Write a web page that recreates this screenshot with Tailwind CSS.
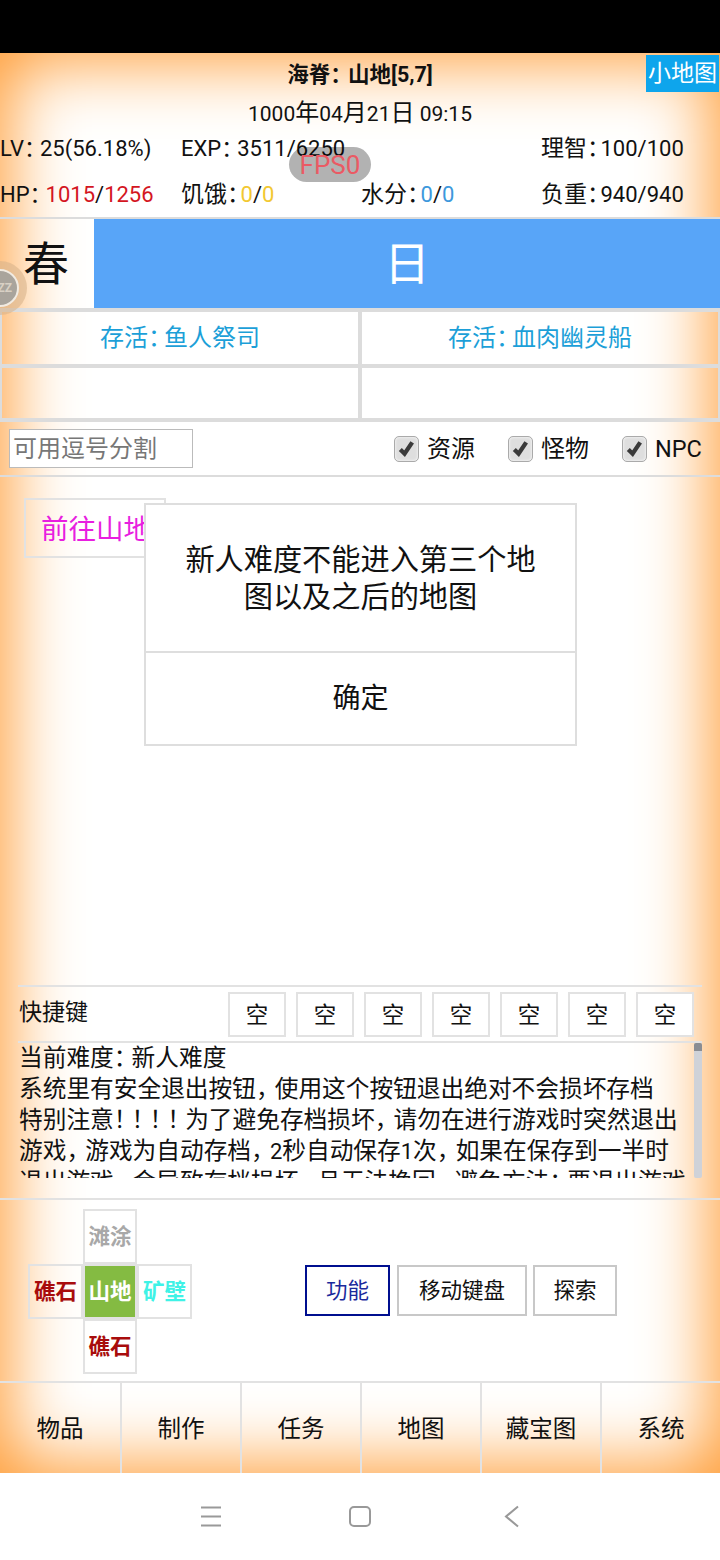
<!DOCTYPE html>
<html lang="zh">

<head>
  <meta charset="UTF-8">
  <meta name="viewport" content="width=device-width, initial-scale=1.0">
  <title>海脊</title>
  <script src="https://cdn.jsdelivr.net/npm/@tailwindcss/browser@4"></script>
</head>

<body class="w-[720px] h-[1560px] overflow-hidden bg-white text-[#111] font-['Roboto','Noto_Sans_CJK_SC',sans-serif] text-[24px] leading-[30px] [font-feature-settings:'halt']">
  <!-- status bar -->
  <div class="h-[53px] bg-black"></div>

  <main class="relative h-[1420px] flex flex-col bg-white shadow-[inset_0_0_70px_8px_#ff9a30] overflow-hidden">
    <!-- header -->
    <header class="relative h-[164px] shrink-0">
      <div class="h-[39px] pt-[7px] text-center font-bold text-[21.5px]">海脊<span class="pr-[7px]">：</span>山地[5,7]</div>
      <div class="h-[36px] pt-[6px] text-center"><span class="text-[21px]">1000</span>年<span class="text-[21px]">04</span>月<span class="text-[21px]">21</span>日<span class="text-[21px]"> 09:15</span></div>
      <div class="flex h-[46px] pt-[6px] text-[23px]">
        <div class="w-[181px] whitespace-nowrap text-[22px]">LV<span class="pr-[5px]">：</span>25(56.18%)</div>
        <div class="w-[360px] whitespace-nowrap text-[22px]">EXP<span class="pr-[5px]">：</span>3511/6250</div>
        <div class="whitespace-nowrap">理智<span class="pr-[2px]">：</span><span class="text-[22px]">100/100</span></div>
      </div>
      <div class="flex h-[43px] pt-[6px] text-[23px]">
        <div class="w-[181px] whitespace-nowrap text-[22px]">HP<span class="pr-[5px]">：</span><span class="text-[#d4161f]">1015</span>/<span class="text-[#d4161f]">1256</span></div>
        <div class="w-[180px] whitespace-nowrap">饥饿<span class="pr-[2px]">：</span><span class="text-[22px]"><span class="text-[#f2c832]">0</span>/<span class="text-[#f2c832]">0</span></span></div>
        <div class="w-[180px] whitespace-nowrap">水分<span class="pr-[2px]">：</span><span class="text-[22px]"><span class="text-[#3d98dc]">0</span>/<span class="text-[#3d98dc]">0</span></span></div>
        <div class="whitespace-nowrap">负重<span class="pr-[2px]">：</span><span class="text-[22px]">940/940</span></div>
      </div>
      <button class="absolute right-[1px] top-[2px] w-[73px] h-[37px] bg-[#0ea5ec] text-white text-[23px]">小地图</button>
      <div class="absolute left-[289px] top-[94px] w-[82px] h-[35px] rounded-full bg-black/30 text-[#ea5a64] text-[26px] leading-[36px] text-center">FPS0</div>
    </header>

    <!-- season row -->
    <section class="h-[95px] shrink-0 flex border-t-2 border-b-4 border-[#dcdcdc]">
      <div class="w-[92px] flex items-center justify-center text-[46px]">春</div>
      <div class="flex-1 ml-[2px] flex items-center justify-center bg-[#58a5f8] text-white text-[46px]">日</div>
    </section>

    <!-- boss status -->
    <section class="h-[106px] shrink-0 grid grid-cols-2 grid-rows-[54px_52px]">
      <div class="flex items-center justify-center border-x-2 border-b-2 border-[#dcdcdc] text-[#1c9fd8]">存活<span class="pr-[4px]">：</span>鱼人祭司</div>
      <div class="flex items-center justify-center border-x-2 border-b-2 border-[#dcdcdc] text-[#1c9fd8]">存活<span class="pr-[4px]">：</span>血肉幽灵船</div>
      <div class="border-x-2 border-t-2 border-[#dcdcdc]"></div>
      <div class="border-x-2 border-t-2 border-[#dcdcdc]"></div>
    </section>

    <!-- filter -->
    <section class="h-[59px] shrink-0 flex items-center pl-[9px] border-t-4 border-b-2 border-[#dcdcdc]">
      <div class="w-[184px] h-[39px] px-[3px] border border-[#bbb] bg-white text-[#777] leading-[39px]">可用逗号分割</div>
      <label class="ml-[201px] flex items-center">
        <span class="w-[25px] h-[26px] rounded-[5px] border border-[#aaa] bg-[#dedede] flex items-center justify-center shadow-[inset_0_0_3px_#fff]">
          <svg viewBox="0 0 20 20" class="w-[19px] h-[19px]"><path d="M3.5 11 L8 15.5 L16 3.5" fill="none" stroke="#3a3a3a" stroke-width="4.5"/></svg>
        </span>
        <span class="ml-[8px]">资源</span>
      </label>
      <label class="ml-[33px] flex items-center">
        <span class="w-[25px] h-[26px] rounded-[5px] border border-[#aaa] bg-[#dedede] flex items-center justify-center shadow-[inset_0_0_3px_#fff]">
          <svg viewBox="0 0 20 20" class="w-[19px] h-[19px]"><path d="M3.5 11 L8 15.5 L16 3.5" fill="none" stroke="#3a3a3a" stroke-width="4.5"/></svg>
        </span>
        <span class="ml-[8px]">怪物</span>
      </label>
      <label class="ml-[33px] flex items-center">
        <span class="w-[25px] h-[26px] rounded-[5px] border border-[#aaa] bg-[#dedede] flex items-center justify-center shadow-[inset_0_0_3px_#fff]">
          <svg viewBox="0 0 20 20" class="w-[19px] h-[19px]"><path d="M3.5 11 L8 15.5 L16 3.5" fill="none" stroke="#3a3a3a" stroke-width="4.5"/></svg>
        </span>
        <span class="ml-[8px] text-[23.5px]">NPC</span>
      </label>
    </section>

    <!-- map actions -->
    <section class="h-[508px] shrink-0 pl-[24px] pt-[21px]">
      <button class="w-[142px] h-[60px] pt-[3px] border-2 border-[#e2e2e2] text-left pl-[15px] text-[#e81ee0] text-[27.5px] whitespace-nowrap overflow-hidden">前往山地</button>
    </section>

    <!-- shortcuts -->
    <section class="h-[58px] shrink-0 mx-[18px] flex items-start pt-[5px] border-y-2 border-[#e2e2e2]">
      <div class="w-[210px] pl-[1px] pt-[6px] text-[23px]">快捷键</div>
      <div class="flex gap-[10px] text-[22.5px]">
        <button class="w-[58px] h-[45px] border-2 border-[#e2e2e2] bg-white">空</button>
        <button class="w-[58px] h-[45px] border-2 border-[#e2e2e2] bg-white">空</button>
        <button class="w-[58px] h-[45px] border-2 border-[#e2e2e2] bg-white">空</button>
        <button class="w-[58px] h-[45px] border-2 border-[#e2e2e2] bg-white">空</button>
        <button class="w-[58px] h-[45px] border-2 border-[#e2e2e2] bg-white">空</button>
        <button class="w-[58px] h-[45px] border-2 border-[#e2e2e2] bg-white">空</button>
        <button class="w-[58px] h-[45px] border-2 border-[#e2e2e2] bg-white">空</button>
      </div>
    </section>

    <!-- log -->
    <section class="relative h-[155px] shrink-0 ml-[19px] mr-[18px]">
      <div class="h-[135px] overflow-hidden leading-[31px] text-[23.7px] w-[670px]">
        当前难度<span class="pr-[6px]">：</span>新人难度<br>
        系统里有安全退出按钮<span class="pr-[7px]">，</span>使用这个按钮退出绝对不会损坏存档<br>
        特别注意<span class="pr-[6px]">！</span><span class="pr-[6px]">！</span><span class="pr-[6px]">！</span><span class="pr-[6px]">！</span>为了避免存档损坏<span class="pr-[7px]">，</span>请勿在进行游戏时突然退出游戏<span class="pr-[7px]">，</span>游戏为自动存档<span class="pr-[7px]">，</span><span class="text-[22px]">2</span>秒自动保存<span class="text-[22px]">1</span>次<span class="pr-[7px]">，</span>如果在保存到一半时退出游戏<span class="pr-[7px]">，</span>会导致存档损坏<span class="pr-[7px]">，</span>且无法挽回<span class="pr-[7px]">，</span>避免方法<span class="pr-[6px]">：</span>要退出游戏
      </div>
      <div class="absolute right-0 top-0 w-[8px] h-[135px] rounded-[2px] bg-[#cfd2d8]">
        <div class="h-[8px] rounded-t-[2px] bg-[#8a8d93]"></div>
      </div>
    </section>

    <!-- movement -->
    <section class="h-[185px] shrink-0 flex items-center border-y-2 border-[#e2e2e2]">
      <div class="ml-[28px] mt-[2px] grid grid-cols-[55px_54px_55px] grid-rows-[55px_55px_55px] font-bold text-[21.5px]">
        <div></div>
        <div class="flex items-center justify-center pt-[1px] border-2 border-[#e2e2e2] text-[#a8a8a8]">滩涂</div>
        <div></div>
        <div class="flex items-center justify-center pt-[1px] border-2 border-[#e2e2e2] text-[#a80c0c]">礁石</div>
        <div class="flex items-center justify-center pt-[1px] border-2 border-[#e2e2e2] bg-[#84bb42] text-white">山地</div>
        <div class="flex items-center justify-center pt-[1px] border-2 border-[#e2e2e2] text-[#3ff2e6]">矿壁</div>
        <div></div>
        <div class="flex items-center justify-center pt-[1px] border-2 border-[#e2e2e2] text-[#a80c0c]">礁石</div>
        <div></div>
      </div>
      <div class="ml-[113px] flex gap-[7px] text-[21.5px]">
        <button class="w-[85px] h-[51px] pt-[1px] border-2 border-[#000f8f] text-[#1a2a9c]">功能</button>
        <button class="w-[130px] h-[51px] pt-[1px] border-2 border-[#c8c8c8]">移动键盘</button>
        <button class="w-[84px] h-[51px] pt-[1px] border-2 border-[#c8c8c8] ml-[-1px]">探索</button>
      </div>
    </section>

    <!-- tabs -->
    <nav class="flex-1 grid grid-cols-6 text-[23.5px]">
      <button class="pt-[2px]">物品</button>
      <button class="pt-[2px] border-l-2 border-[#e2e2e2]">制作</button>
      <button class="pt-[2px] border-l-2 border-[#e2e2e2]">任务</button>
      <button class="pt-[2px] border-l-2 border-[#e2e2e2]">地图</button>
      <button class="pt-[2px] border-l-2 border-[#e2e2e2]">藏宝图</button>
      <button class="pt-[2px] border-l-2 border-[#e2e2e2]">系统</button>
    </nav>

    <!-- dialog -->
    <div class="absolute left-[144px] top-[450px] w-[433px] h-[243px] flex flex-col bg-white border-2 border-[#dedede]">
      <div class="h-[146px] pt-[2px] flex items-center justify-center px-[36px] text-center text-[29.2px] leading-[37px]">新人难度不能进入第三个地图以及之后的地图</div>
      <div class="flex-1 flex items-center justify-center border-t-2 border-[#dedede] text-[28px]">确定</div>
    </div>

    <!-- floating ball -->
    <div class="absolute -left-[27px] top-[208px] w-[54px] h-[54px] rounded-full bg-[#d9b48c]/60 flex items-center justify-center">
      <div class="w-[38px] h-[38px] rounded-full border-[2px] border-[#f1ebe2] bg-[#a9a49c] text-[#d8d0c4] text-[12px] font-bold leading-[34px] text-right pr-[5px]">ZZ</div>
    </div>
  </main>

  <!-- android nav bar -->
  <footer class="h-[87px] bg-white">
    <svg viewBox="0 0 720 87" class="w-[720px] h-[87px]" fill="none" stroke="#999" stroke-width="2">
      <path d="M201 34.5H221M201 43.5H221M201 52.5H221"/>
      <rect x="350" y="34" width="20" height="19" rx="4"/>
      <path d="M518 33.5 L506 43.5 L518 53.5"/>
    </svg>
  </footer>
</body>

</html>
